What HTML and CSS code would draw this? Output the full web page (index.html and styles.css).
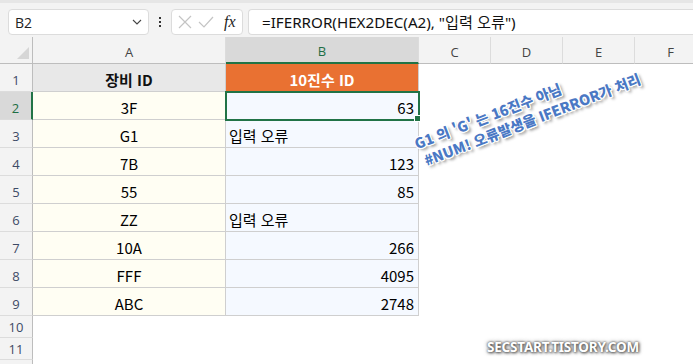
FILE: index.html
```html
<!DOCTYPE html>
<html lang="ko">
<head>
<meta charset="utf-8">
<link rel="stylesheet" href="styles.css">
</head>
<body>
<div class="app">
  <div class="fbar">
    <div class="namebox">
      <span class="nb-text">B2</span>
      <svg class="chev" width="10" height="6" viewBox="0 0 10 6"><path d="M1 1 L5 5 L9 1" fill="none" stroke="#444" stroke-width="1.1"/></svg>
    </div>
    <div class="dots"><i></i><i></i><i></i></div>
    <div class="fxbox">
      <svg width="14" height="14" viewBox="0 0 14 14"><path d="M1 1 L13 13 M13 1 L1 13" stroke="#c4c4c4" stroke-width="1.2"/></svg>
      <svg width="16" height="14" viewBox="0 0 16 14"><path d="M1 7 L6 12 L15 2" fill="none" stroke="#c4c4c4" stroke-width="1.2"/></svg>
      <span class="fx">fx</span>
    </div>
    <div class="formula">=IFERROR(HEX2DEC(A2), "입력 오류")</div>
  </div>
  <div class="sheet">
    <div class="grid">
      <div class="corner"><span class="tri"></span></div>
      <div class="ch">A</div>
      <div class="ch sel">B</div>
      <div class="ch">C</div>
      <div class="ch">D</div>
      <div class="ch">E</div>
      <div class="ch">F</div>

      <div class="rh">1</div>
      <div class="cell hdA">장비 ID</div>
      <div class="cell hdB">10진수 ID</div>
      <div class="blank"></div><div class="blank"></div><div class="blank"></div><div class="blank"></div>

      <div class="rh sel">2</div>
      <div class="cell a">3F</div>
      <div class="cell b num active">63<span class="handle"></span></div>
      <div class="blank"></div><div class="blank"></div><div class="blank"></div><div class="blank"></div>

      <div class="rh">3</div>
      <div class="cell a">G1</div>
      <div class="cell b txt">입력 오류</div>
      <div class="blank"></div><div class="blank"></div><div class="blank"></div><div class="blank"></div>

      <div class="rh">4</div>
      <div class="cell a">7B</div>
      <div class="cell b num">123</div>
      <div class="blank"></div><div class="blank"></div><div class="blank"></div><div class="blank"></div>

      <div class="rh">5</div>
      <div class="cell a">55</div>
      <div class="cell b num">85</div>
      <div class="blank"></div><div class="blank"></div><div class="blank"></div><div class="blank"></div>

      <div class="rh">6</div>
      <div class="cell a">ZZ</div>
      <div class="cell b txt">입력 오류</div>
      <div class="blank"></div><div class="blank"></div><div class="blank"></div><div class="blank"></div>

      <div class="rh">7</div>
      <div class="cell a">10A</div>
      <div class="cell b num">266</div>
      <div class="blank"></div><div class="blank"></div><div class="blank"></div><div class="blank"></div>

      <div class="rh">8</div>
      <div class="cell a">FFF</div>
      <div class="cell b num">4095</div>
      <div class="blank"></div><div class="blank"></div><div class="blank"></div><div class="blank"></div>

      <div class="rh">9</div>
      <div class="cell a">ABC</div>
      <div class="cell b num">2748</div>
      <div class="blank"></div><div class="blank"></div><div class="blank"></div><div class="blank"></div>

      <div class="rh short">10</div>
      <div class="blank"></div><div class="blank"></div><div class="blank"></div><div class="blank"></div><div class="blank"></div><div class="blank"></div>

      <div class="rh short">11</div>
      <div class="blank"></div><div class="blank"></div><div class="blank"></div><div class="blank"></div><div class="blank"></div><div class="blank"></div>

      <div class="rh short"></div>
      <div class="blank"></div><div class="blank"></div><div class="blank"></div><div class="blank"></div><div class="blank"></div><div class="blank"></div>
    </div>
    <div class="note">
      <div class="note-line">G1 의 'G' 는 16진수 아님</div>
      <div class="note-line">#NUM! 오류발생을 IFERROR가 처리</div>
    </div>
    <div class="mark">SECSTART.TISTORY.COM</div>
  </div>
</div>
</body>
</html>
```

FILE: styles.css
```css
* { box-sizing: border-box; }
html, body { margin: 0; padding: 0; }
body {
  width: 693px;
  height: 364px;
  overflow: hidden;
  background: #fff;
  font-family: "Noto Sans CJK KR", "Noto Sans", sans-serif;
  color: #000;
}
.app { width: 693px; height: 364px; overflow: hidden; }

.fbar {
  height: 37px;
  background: #f3f3f3;
  border-top: 3px solid #e6e6e6;
  display: flex;
  align-items: flex-start;
  padding: 6px 0 0 8px;
}
.namebox {
  width: 141px;
  height: 26px;
  background: #fff;
  border: 1px solid #dcdcdc;
  border-radius: 4px;
  display: flex;
  align-items: center;
  justify-content: space-between;
  padding: 0 6px 0 6px;
}
.nb-text {
  font-family: "Open Sans", "Noto Sans", sans-serif;
  font-size: 14px;
  color: #222;
}
.dots {
  width: 22px;
  height: 26px;
  display: flex;
  flex-direction: column;
  align-items: center;
  justify-content: center;
  gap: 2px;
}
.dots i { width: 2px; height: 2px; background: #333; display: block; }
.fxbox {
  width: 72px;
  height: 26px;
  background: #fff;
  border: 1px solid #dcdcdc;
  border-radius: 4px;
  display: flex;
  align-items: center;
  gap: 6px;
  padding-left: 6px;
}
.fx {
  font-family: "Liberation Serif", serif;
  font-style: italic;
  font-size: 16px;
  color: #222;
  margin-left: 4px;
}
.formula {
  margin-left: 5px;
  flex: 1;
  height: 26px;
  background: #fff;
  border: 1px solid #dcdcdc;
  border-right: none;
  border-radius: 4px 0 0 4px;
  padding-left: 13px;
  font-family: "Noto Sans", "Noto Sans CJK KR", sans-serif;
  font-size: 15.2px;
  line-height: 24px;
  color: #111;
  white-space: nowrap;
}

.sheet { position: relative; }
.grid {
  display: grid;
  grid-template-columns: 33px 193px 193px 72px 72px 72px 72px;
  grid-template-rows: 27px repeat(9, 28px) 22px 22px 22px;
  width: 707px;
}
.corner {
  background: #f3f3f3;
  border-right: 1px solid #bdbdbd;
  border-bottom: 1px solid #bdbdbd;
  position: relative;
}
.tri {
  position: absolute;
  right: 3px;
  bottom: 4px;
  width: 0; height: 0;
  border-left: 12px solid transparent;
  border-bottom: 12px solid #d6d6d6;
}
.ch {
  background: #f3f3f3;
  border-right: 1px solid #dcdcdc;
  border-bottom: 1px solid #bdbdbd;
  display: flex;
  align-items: center;
  justify-content: center;
  font-family: "Open Sans", "Noto Sans", sans-serif;
  font-size: 13px;
  color: #444;
  padding-top: 3px;
}
.ch.sel {
  background: #d9d9d9;
  color: #1e6e45;
  border-bottom: 2px solid #217346;
}
.rh {
  background: #f3f3f3;
  border-right: 1px solid #bdbdbd;
  border-bottom: 1px solid #dcdcdc;
  display: flex;
  align-items: center;
  justify-content: center;
  font-family: "Open Sans", "Noto Sans", sans-serif;
  font-size: 13px;
  color: #3d4a66;
  padding-top: 4px;
}
.rh.short { padding-top: 0; }
.rh.sel {
  background: #d9d9d9;
  color: #1e6e45;
  border-right: 2px solid #217346;
}
.blank { background: #fff; }
.cell {
  border-right: 1px solid #cfcfcf;
  border-bottom: 1px solid #cfcfcf;
  font-size: 15px;
  display: flex;
  align-items: center;
  padding-top: 3px;
  white-space: nowrap;
  position: relative;
}
.hdA {
  background: #e8e8e8;
  font-weight: 700;
  justify-content: center;
  color: #111;
}
.hdB {
  background: #e97132;
  color: #fff;
  font-weight: 700;
  justify-content: center;
}
.a { background: #fffef3; justify-content: center; }
.b { background: #f5f9ff; }
.num { justify-content: flex-end; padding-right: 4px; }
.txt { justify-content: flex-start; padding-left: 3px; }
.active {
  outline: 2px solid #217346;
  outline-offset: -1px;
  z-index: 2;
}
.handle {
  position: absolute;
  right: -3px;
  bottom: -3px;
  width: 5px;
  height: 5px;
  background: #217346;
  border: 1px solid #fff;
  box-sizing: content-box;
}

.note {
  position: absolute;
  left: 425px;
  top: 95px;
  transform: rotate(-21deg);
  transform-origin: 0 100%;
  font-family: "Noto Sans CJK KR", sans-serif;
  font-weight: 800;
  font-size: 14.3px;
  line-height: 19px;
  color: #4a78c4;
  white-space: nowrap;
  z-index: 5;
  text-shadow:
    1px 0 0 #fff, -1px 0 0 #fff, 0 1px 0 #fff, 0 -1px 0 #fff,
    1px 1px 0 #fff, -1px -1px 0 #fff, 1px -1px 0 #fff, -1px 1px 0 #fff,
    2px 3px 3px rgba(0,0,0,0.45);
}
.note-line:nth-child(2) { padding-left: 3px; }
.mark {
  position: absolute;
  left: 487px;
  top: 301px;
  font-family: "Noto Sans", sans-serif;
  font-weight: 700;
  font-size: 13.5px;
  letter-spacing: -0.2px;
  color: #fff;
  z-index: 5;
  text-shadow: 0 0 2px #555, 1px 1px 3px #555, 0 0 4px rgba(0,0,0,0.5);
}
```
